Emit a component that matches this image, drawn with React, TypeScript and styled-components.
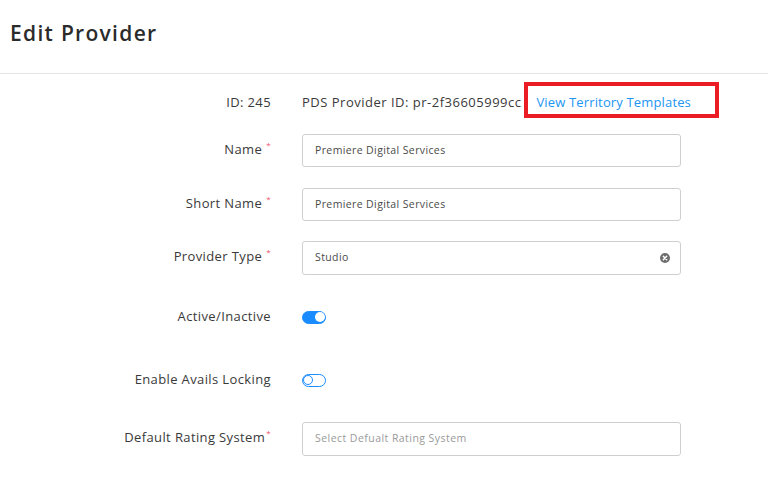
import React from 'react';
import styled, { createGlobalStyle } from 'styled-components';

const GlobalStyle = createGlobalStyle`
  html, body {
    margin: 0;
    padding: 0;
    background: #fff;
  }
  body {
    font-family: 'Open Sans', 'Liberation Sans', sans-serif;
    color: #333;
  }
`;

const palette = {
  text: '#3a3a3a',
  inputText: '#4a4a4a',
  placeholder: '#9a9a9a',
  border: '#cfcfcf',
  line: '#e4e4e4',
  blue: '#1a8cff',
  link: '#2196f3',
  required: '#f0506e',
  highlight: '#ec1c24',
};

const fields = [
  { label: 'Name', value: 'Premiere Digital Services', top: 17 },
  { label: 'Short Name', value: 'Premiere Digital Services', top: 21 },
];

const App = () => {
  return (
    <React.Fragment>
      <GlobalStyle />
      <Page>
        <Header>
          <Title>Edit Provider</Title>
        </Header>

        <Form>
          <Row $top={11} $height={32}>
            <Label>ID: 245</Label>
            <IdLine>
              <span>PDS Provider ID: pr-2f36605999cc</span>
              <LinkBox>
                <Link href="#">View Territory Templates</Link>
              </LinkBox>
            </IdLine>
          </Row>

          {fields.map((f) => (
            <Row key={f.label} $top={f.top} $height={33}>
              <Label>
                {f.label}
                <Required $spaced>*</Required>
              </Label>
              <Input>{f.value}</Input>
            </Row>
          ))}

          <Row $top={20} $height={34}>
            <Label>
              Provider Type
              <Required $spaced>*</Required>
            </Label>
            <Input>
              <span>Studio</span>
              <ClearIcon viewBox="0 0 10 10">
                <circle cx="5" cy="5" r="5" fill="#6d6d6d" />
                <path
                  d="M3.3 3.3 L6.7 6.7 M6.7 3.3 L3.3 6.7"
                  stroke="#fff"
                  strokeWidth="1.5"
                  strokeLinecap="round"
                />
              </ClearIcon>
            </Input>
          </Row>

          <Row $top={26} $height={33}>
            <Label>Active/Inactive</Label>
            <Toggle $on />
          </Row>

          <Row $top={30} $height={33}>
            <Label>Enable Avails Locking</Label>
            <Toggle />
          </Row>

          <Row $top={25} $height={34}>
            <Label>
              Default Rating System
              <Required>*</Required>
            </Label>
            <Input $placeholder>Select Defualt Rating System</Input>
          </Row>
        </Form>
      </Page>
    </React.Fragment>
  );
};

const Page = styled.div`
  width: 768px;
  height: 488px;
  overflow: hidden;
  background: #fff;
`;

const Header = styled.header`
  height: 74px;
  display: flex;
  align-items: center;
  padding: 0 10px;
  border-bottom: 1px solid ${palette.line};
  box-sizing: border-box;
`;

const Title = styled.h1`
  margin: 0 0 8px;
  font-size: 21px;
  font-weight: 600;
  letter-spacing: 1.3px;
  color: #2b2b2b;
`;

const Form = styled.div`
  display: flex;
  flex-direction: column;
`;

const Row = styled.div<{ $top: number; $height: number }>`
  display: grid;
  grid-template-columns: 271px 379px;
  column-gap: 31px;
  align-items: center;
  margin-top: ${(p) => p.$top}px;
  height: ${(p) => p.$height}px;
`;

const Label = styled.div`
  text-align: right;
  font-size: 13px;
  letter-spacing: 0.38px;
  color: ${palette.text};
  white-space: nowrap;
  margin-bottom: 4px;
`;

const Required = styled.sup<{ $spaced?: boolean }>`
  color: ${palette.required};
  font-size: 8px;
  margin-left: ${(p) => (p.$spaced ? 4 : 1)}px;
  vertical-align: 6px;
  line-height: 0;
`;

const IdLine = styled.div`
  display: flex;
  align-items: center;
  font-size: 13px;
  letter-spacing: 0.5px;
  color: ${palette.text};
  white-space: nowrap;
  margin-bottom: 5px;
  min-width: 0;
  overflow: visible;
`;

const LinkBox = styled.div`
  flex-shrink: 0;
  margin: -3px 0 0 3px;
  width: 195px;
  height: 36px;
  box-sizing: border-box;
  border: 4px solid ${palette.highlight};
  display: flex;
  align-items: center;
  padding: 3px 0 0 8px;
`;

const Link = styled.a`
  color: ${palette.link};
  text-decoration: none;
  font-size: 13px;
  letter-spacing: 0.15px;
`;

const Input = styled.div<{ $placeholder?: boolean }>`
  height: 100%;
  box-sizing: border-box;
  border: 1px solid ${palette.border};
  border-radius: 3px;
  display: flex;
  align-items: center;
  justify-content: space-between;
  padding: 0 10px 2px 12px;
  font-size: 10.5px;
  letter-spacing: ${(p) => (p.$placeholder ? 0.45 : 0.38)}px;
  color: ${(p) => (p.$placeholder ? palette.placeholder : palette.inputText)};

  & > svg {
    margin-top: 2px;
  }
`;

const ClearIcon = styled.svg`
  width: 10px;
  height: 10px;
`;

const Toggle = styled.span<{ $on?: boolean }>`
  position: relative;
  display: inline-block;
  width: 24px;
  height: 13px;
  box-sizing: border-box;
  border-radius: 7px;
  border: 1.5px solid ${palette.blue};
  background: ${(p) => (p.$on ? palette.blue : '#fff')};

  &::after {
    content: '';
    position: absolute;
    top: 0;
    ${(p) => (p.$on ? 'right: 0;' : 'left: 0;')}
    width: 10px;
    height: 10px;
    box-sizing: border-box;
    border-radius: 50%;
    background: #fff;
    border: ${(p) => (p.$on ? 'none' : `1.5px solid ${palette.blue}`)};
  }
`;

export default App;
